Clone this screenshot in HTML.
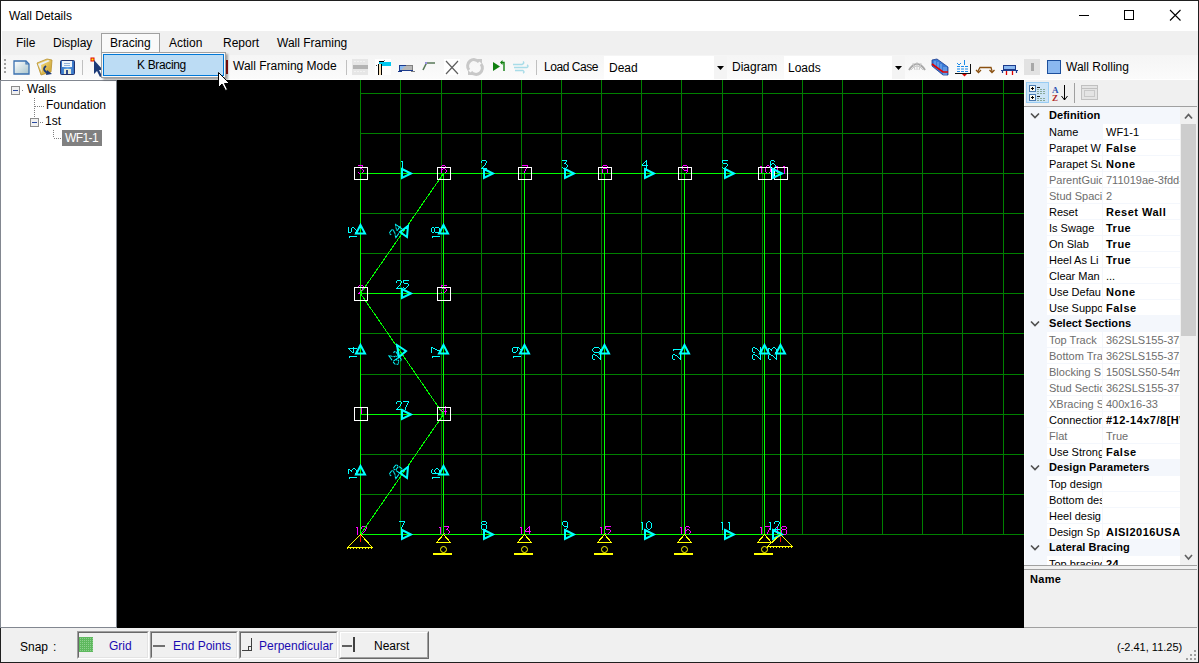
<!DOCTYPE html>
<html><head><meta charset="utf-8"><title>Wall Details</title>
<style>
html,body{margin:0;padding:0;}
body{width:1199px;height:663px;position:relative;overflow:hidden;background:#f0f0f0;font-family:"Liberation Sans",sans-serif;}
.r{position:absolute;}
.t{position:absolute;white-space:pre;line-height:1;font-family:"Liberation Sans",sans-serif;}
svg.r{overflow:visible;}
</style></head><body>
<div class="r" style="left:0px;top:0px;width:1199px;height:663px;background:#1f1f1f;"></div>
<div class="r" style="left:1px;top:1px;width:1197px;height:661px;background:#ffffff;"></div>
<div class="t" style="left:9px;top:9.84px;font-size:12px;color:#000;">Wall Details</div>
<svg class="r" style="left:1070px;top:5px" width="125" height="22" viewBox="1070 5 125 22" shape-rendering="crispEdges"><path d="M1079 15.5 H1089" stroke="#000" stroke-width="1"/><rect x="1124.5" y="10.5" width="9" height="9" stroke="#000" fill="none"/></svg>
<svg class="r" style="left:1165px;top:5px" width="20" height="20" viewBox="1165 5 20 20"><path d="M1170 10 L1180.5 20.5 M1180.5 10 L1170 20.5" stroke="#000" stroke-width="1.1"/></svg>
<div class="r" style="left:2px;top:31px;width:1196px;height:24px;background:#f0f0f0;"></div>
<div class="r" style="left:2px;top:55px;width:1196px;height:24px;background:linear-gradient(#f5f5f5,#fbfbfb);"></div>
<div class="r" style="left:2px;top:79px;width:1196px;height:1px;background:#ffffff;"></div>
<div class="r" style="left:4px;top:59px;width:2px;height:2px;background:#a0a0a0;"></div><div class="r" style="left:4px;top:63px;width:2px;height:2px;background:#a0a0a0;"></div><div class="r" style="left:4px;top:67px;width:2px;height:2px;background:#a0a0a0;"></div><div class="r" style="left:4px;top:71px;width:2px;height:2px;background:#a0a0a0;"></div>

<svg class="r" style="left:0;top:55px" width="1199" height="24" viewBox="0 55 1199 24">
 <defs>
  <linearGradient id="gdoc" x1="0" y1="0" x2="1" y2="1"><stop offset="0" stop-color="#ffffff"/><stop offset="1" stop-color="#a8c4cc"/></linearGradient>
  <linearGradient id="gfold" x1="0" y1="0" x2="1" y2="1"><stop offset="0" stop-color="#f4d878"/><stop offset="1" stop-color="#c8a030"/></linearGradient>
  <linearGradient id="gsave" x1="0" y1="0" x2="1" y2="0"><stop offset="0" stop-color="#2f6cc0"/><stop offset="0.5" stop-color="#6aa8e8"/><stop offset="1" stop-color="#2f6cc0"/></linearGradient>
 </defs>
 <path d="M14 61 H26 L29 64 V74 H14 Z" fill="url(#gdoc)" stroke="#3a70b0" stroke-width="1.3"/>
 <path d="M26 61 V64 H29" fill="none" stroke="#3a70b0" stroke-width="1.2"/>
 <path d="M37 63 L47 59 L52 60 L51 72 L41 75 Z" fill="url(#gfold)" stroke="#b89030" stroke-width="0.8"/>
 <path d="M38 64 L48 60 L50 61 L42 73 Z" fill="#e8f0fa"/>
 <path d="M41 65 L50 61 L51 71 L42 74 Z" fill="url(#gfold)"/>
 <path d="M46 66 Q42 69 46 72 L48 73" stroke="#1d3b78" stroke-width="1.8" fill="none"/>
 <path d="M47 70 L52 74 L46 75 Z" fill="#1d3b78"/>
 <rect x="60.5" y="60.5" width="14" height="14" rx="1" fill="url(#gsave)" stroke="#22336e"/>
 <rect x="62" y="61" width="10" height="6" fill="#eef4fa"/>
 <path d="M64 63.5 H70 M64 65.5 H70" stroke="#7aa0d0" stroke-width="0.8"/>
 <rect x="64" y="69" width="7" height="5" fill="#e8ecd8"/>
 <rect x="66" y="70" width="2" height="4" fill="#2f4a90"/>
 <path d="M82.5 60 V75" stroke="#c0c0c0"/>
 <rect x="91" y="58" width="3" height="3" fill="#ffee00" stroke="#e00000" stroke-width="1"/>
 <path d="M94 60 L94 74 L97 71 L100 77 L102 76 L99 70 L103 70 Z" fill="#1d3b78"/>
 <rect x="226" y="60" width="2" height="14" fill="#a01010"/>
 <path d="M346.5 60 V75" stroke="#c0c0c0"/>
 <!-- grayed beam -->
 <rect x="352" y="59" width="16" height="16" fill="#e6e6e6"/>
 <rect x="353" y="65" width="15" height="4" fill="#b4b4b4"/>
 <path d="M354 61.5 H366 M354 71.5 H366" stroke="#f2f2f2" stroke-dasharray="2 1"/>
 <!-- column -->
 <rect x="375" y="59" width="16" height="16" fill="#ffffff"/>
 <rect x="379" y="62" width="12" height="4" fill="#00c8f0"/>
 <rect x="378" y="64" width="4" height="11" fill="#f8e0b8"/>
 <path d="M378.5 64 V75 M381.5 64 V75" stroke="#000"/>
 <path d="M379 61.5 H384" stroke="#000"/>
 <rect x="384" y="60" width="1" height="1" fill="#808080"/>
 <rect x="376" y="65" width="1" height="1" fill="#404040"/>
 <!-- beam icon -->
 <path d="M400 65 H413 V70 H400 Z" fill="#b8b8b8"/>
 <path d="M400 65 H406 L401 70 H400 Z" fill="#8ab8f0"/>
 <path d="M399.5 65 V72 M399 65.5 H406" stroke="#1d3b8c"/>
 <path d="M406 65.5 H413 M412.5 65 V72" stroke="#808080"/>
 <path d="M399.5 70.5 H413" stroke="#1d3b8c"/>
 <path d="M398 71.5 H402" stroke="#1d3b8c"/>
 <path d="M411 71.5 H415" stroke="#808080"/>
 <!-- bend -->
 <path d="M423 70 L426.5 63 H435" stroke="#5a7a5a" stroke-width="1.6" fill="none"/>
 <rect x="425" y="62" width="2" height="2" fill="#9a90e0"/>
 <!-- X -->
 <rect x="444" y="59" width="16" height="16" fill="#ffffff"/>
 <path d="M446 61 L458 74 M458 61 L446 74" stroke="#606060" stroke-width="1.2"/>
 <!-- refresh gray -->
 <path d="M469 70 A6 6 0 0 1 479 62" stroke="#c8c8c8" stroke-width="3" fill="none"/>
 <path d="M481 64 A6 6 0 0 1 471 72" stroke="#c8c8c8" stroke-width="3" fill="none"/>
 <path d="M477 59 L482 59 L482 64 Z M473 75 L468 75 L468 70 Z" fill="#c8c8c8"/>
 <!-- green play -->
 <path d="M493 62 L500 66.5 L493 71 Z" fill="#108010"/>
 <path d="M501.5 62.5 H504 V71" stroke="#108010" stroke-width="1.4" fill="none"/>
 <path d="M500 62.5 L502.5 60 L502.5 65 Z" fill="#108010"/>
 <!-- wind -->
 <path d="M513 64.5 H522 Q525 63 523 61.5 M514 67.5 H527 Q529 66 527 65 M515 70.5 H523 Q525 72 523 73" stroke="#a8dce8" stroke-width="1.4" fill="none"/>
 <path d="M536.5 60 V75" stroke="#c0c0c0"/>
 <!-- right icons -->
 <path d="M909 70 Q917 58 925 70" stroke="#a8a8a8" stroke-width="2" fill="none"/>
 <path d="M911 70 Q917 62 923 70 M913 63 L915 70 M917 62 V70 M921 63 L919 70" stroke="#c8c8c8" stroke-width="1" fill="none"/>
 <path d="M932 60 L937 59 L948 67 L948 75 L943 75 L932 66 Z" fill="#3a7ad8" stroke="#1d3b8c" stroke-width="0.8"/>
 <path d="M935 61 L935 66 M938 62 L938 68 M941 64 L941 71 M944 67 V75 M946 67 V75" stroke="#9cc8f4" stroke-width="0.8"/>
 <path d="M932 64 L943 72 H948" stroke="#e00000" stroke-width="1.6" fill="none"/>
 <path d="M964.5 60 V65" stroke="#1a8ae8"/>
 <path d="M957 63 L959 65 L961 63" stroke="#1a8ae8" fill="none"/>
 <path d="M957 66.5 H969 M957 69 H969 M957 71.5 H969" stroke="#1a8ae8" stroke-dasharray="3 1" fill="none"/>
 <path d="M955 73.5 H971 M970.5 64 V73" stroke="#101010" fill="none"/>
 <path d="M962 74 H967 L964.5 76.5 Z" fill="#e00000"/>
 <path d="M978 71 L980 67.5 H991 L992 71" stroke="#8a5010" stroke-width="1.3" fill="none"/>
 <path d="M976 70 L978.5 72.5 L981 70 M989.5 70 L992 72.5 L994.5 70" stroke="#8a5010" stroke-width="1.3" fill="none"/>
 <rect x="1003.5" y="65.5" width="12" height="4" fill="#8ab8f0" stroke="#1d3b8c"/>
 <path d="M1001 70.5 H1018 M1002.5 70 V73 M1016.5 70 V73" stroke="#1d3b8c" stroke-width="1.2"/>
 <path d="M1006.5 71 V75 M1012.5 71 V75" stroke="#e00000" stroke-width="1.3"/>
 <rect x="1024" y="59" width="16" height="16" fill="#e2e2e2"/>
 <rect x="1031" y="63" width="3" height="8" fill="#a8a8a8"/>
 <rect x="1047.5" y="60.5" width="13" height="13" fill="#8ab8f0" stroke="#1d4f9c"/>
</svg>
<div class="t" style="left:233px;top:60.34px;font-size:12px;color:#000;">Wall Framing Mode</div>
<div class="t" style="left:544px;top:60.84px;font-size:12px;color:#000;letter-spacing:-0.45px;">Load Case</div>
<div class="r" style="left:604px;top:56px;width:123px;height:23px;background:#ffffff;"></div>
<div class="r" style="left:714px;top:56px;width:13px;height:23px;background:#f4f4f4;"></div>
<svg class="r" style="left:714px;top:60px" width="13" height="15"><path d="M3 6 H10 L6.5 10 Z" fill="#000"/></svg>
<div class="t" style="left:609px;top:61.84px;font-size:12px;color:#000;">Dead</div>
<div class="t" style="left:732px;top:60.84px;font-size:12px;color:#000;">Diagram</div>
<div class="r" style="left:784px;top:56px;width:121px;height:23px;background:#ffffff;"></div>
<div class="r" style="left:892px;top:56px;width:13px;height:23px;background:#f4f4f4;"></div>
<svg class="r" style="left:892px;top:60px" width="13" height="15"><path d="M3 6 H10 L6.5 10 Z" fill="#000"/></svg>
<div class="t" style="left:788px;top:61.84px;font-size:12px;color:#000;">Loads</div>
<div class="t" style="left:1066px;top:60.84px;font-size:12px;color:#000;">Wall Rolling</div>
<div class="r" style="left:0px;top:80px;width:117px;height:548px;background:#828790;"></div>
<div class="r" style="left:1px;top:81px;width:115px;height:546px;background:#ffffff;"></div>
<div class="r" style="left:1px;top:81px;width:1px;height:546px;background:#ffffff;"></div>
<svg class="r" style="left:0;top:80px" width="117" height="80" viewBox="0 80 117 80" shape-rendering="crispEdges">
 <rect x="11.5" y="86.5" width="8" height="8" fill="#f0f0f0" stroke="#8c8c8c"/>
 <path d="M13 90.5 H18" stroke="#2a4aa0"/>
 <rect x="30.5" y="118.5" width="8" height="8" fill="#f0f0f0" stroke="#8c8c8c"/>
 <path d="M32 122.5 H37" stroke="#2a4aa0"/>
 <path d="M21.5 90.5 H24" stroke="#808080" stroke-dasharray="1 1"/>
 <path d="M34.5 98 V117" stroke="#808080" stroke-dasharray="1 1"/>
 <path d="M35 106.5 H44" stroke="#808080" stroke-dasharray="1 1"/>
 <path d="M40 122.5 H44" stroke="#808080" stroke-dasharray="1 1"/>
 <path d="M53.5 130 V138" stroke="#808080" stroke-dasharray="1 1"/>
 <path d="M54 138.5 H62" stroke="#808080" stroke-dasharray="1 1"/>
 <rect x="62" y="130" width="40" height="16" fill="#808080"/>
</svg>
<div class="t" style="left:27px;top:82.84px;font-size:12px;color:#000;">Walls</div>
<div class="t" style="left:46px;top:98.84px;font-size:12px;color:#000;">Foundation</div>
<div class="t" style="left:45px;top:114.84px;font-size:12px;color:#000;">1st</div>
<div class="t" style="left:65px;top:131.84px;font-size:12px;color:#ffffff;letter-spacing:-0.6px;">WF1-1</div>
<svg class="r" style="left:117px;top:80px" width="907" height="548" viewBox="117 80 907 548" shape-rendering="crispEdges"><rect x="117" y="80" width="907" height="548" fill="#000"/>
<path d="M360.5 80 V535 M400.5 80 V535 M441.5 80 V535 M481.5 80 V535 M521.5 80 V535 M561.5 80 V535 M601.5 80 V535 M641.5 80 V535 M681.5 80 V535 M722.5 80 V535 M762.5 80 V535 M802.5 80 V535 M842.5 80 V535 M882.5 80 V535 M922.5 80 V535 M962.5 80 V535 M1003.5 80 V535 M360 93.5 H1024 M360 133.5 H1024 M360 173.5 H1024 M360 213.5 H1024 M360 253.5 H1024 M360 293.5 H1024 M360 333.5 H1024 M360 374.5 H1024 M360 414.5 H1024 M360 454.5 H1024 M360 494.5 H1024 M360 534.5 H1024" stroke="#008000" stroke-width="1" fill="none"/>
<path d="M358 165h1v1h-1z M359 165h1v1h-1z M360 165h1v1h-1z M361 165h1v1h-1z M362 165h1v1h-1z M362 166h1v1h-1z M361 167h1v1h-1z M360 168h1v1h-1z M361 168h1v1h-1z M362 169h1v1h-1z M363 170h1v1h-1z M363 171h1v1h-1z M358 172h1v1h-1z M362 172h1v1h-1z M359 173h1v1h-1z M360 173h1v1h-1z M361 173h1v1h-1z" fill="#ff00ff"/>
<path d="M442 165h1v1h-1z M443 165h1v1h-1z M444 165h1v1h-1z M441 166h1v1h-1z M445 166h1v1h-1z M441 167h1v1h-1z M441 168h1v1h-1z M443 168h1v1h-1z M444 168h1v1h-1z M441 169h1v1h-1z M442 169h1v1h-1z M445 169h1v1h-1z M441 170h1v1h-1z M446 170h1v1h-1z M441 171h1v1h-1z M446 171h1v1h-1z M441 172h1v1h-1z M445 172h1v1h-1z M442 173h1v1h-1z M443 173h1v1h-1z M444 173h1v1h-1z" fill="#ff00ff"/>
<path d="M522 165h1v1h-1z M523 165h1v1h-1z M524 165h1v1h-1z M525 165h1v1h-1z M526 165h1v1h-1z M527 165h1v1h-1z M527 166h1v1h-1z M526 167h1v1h-1z M526 168h1v1h-1z M525 169h1v1h-1z M525 170h1v1h-1z M524 171h1v1h-1z M524 172h1v1h-1z M524 173h1v1h-1z" fill="#ff00ff"/>
<path d="M603 165h1v1h-1z M604 165h1v1h-1z M605 165h1v1h-1z M606 165h1v1h-1z M602 166h1v1h-1z M607 166h1v1h-1z M602 167h1v1h-1z M607 167h1v1h-1z M603 168h1v1h-1z M604 168h1v1h-1z M605 168h1v1h-1z M606 168h1v1h-1z M602 169h1v1h-1z M607 169h1v1h-1z M602 170h1v1h-1z M607 170h1v1h-1z M602 171h1v1h-1z M607 171h1v1h-1z M602 172h1v1h-1z M607 172h1v1h-1z M603 173h1v1h-1z M604 173h1v1h-1z M605 173h1v1h-1z M606 173h1v1h-1z" fill="#ff00ff"/>
<path d="M683 165h1v1h-1z M684 165h1v1h-1z M685 165h1v1h-1z M686 165h1v1h-1z M682 166h1v1h-1z M687 166h1v1h-1z M682 167h1v1h-1z M687 167h1v1h-1z M682 168h1v1h-1z M687 168h1v1h-1z M683 169h1v1h-1z M687 169h1v1h-1z M684 170h1v1h-1z M685 170h1v1h-1z M686 170h1v1h-1z M687 170h1v1h-1z M687 171h1v1h-1z M686 172h1v1h-1z M685 173h1v1h-1z" fill="#ff00ff"/>
<path d="M760 166h1v1h-1z M761 166h1v1h-1z M761 167h1v1h-1z M761 168h1v1h-1z M761 169h1v1h-1z M761 170h1v1h-1z M761 171h1v1h-1z M761 172h1v1h-1z M761 173h1v1h-1z M767 165h1v1h-1z M768 165h1v1h-1z M766 166h1v1h-1z M769 166h1v1h-1z M765 167h1v1h-1z M770 167h1v1h-1z M765 168h1v1h-1z M770 168h1v1h-1z M765 169h1v1h-1z M770 169h1v1h-1z M765 170h1v1h-1z M770 170h1v1h-1z M765 171h1v1h-1z M770 171h1v1h-1z M766 172h1v1h-1z M769 172h1v1h-1z M767 173h1v1h-1z M768 173h1v1h-1z" fill="#ff00ff"/>
<path d="M776 166h1v1h-1z M777 166h1v1h-1z M777 167h1v1h-1z M777 168h1v1h-1z M777 169h1v1h-1z M777 170h1v1h-1z M777 171h1v1h-1z M777 172h1v1h-1z M777 173h1v1h-1z M783 166h1v1h-1z M784 166h1v1h-1z M784 167h1v1h-1z M784 168h1v1h-1z M784 169h1v1h-1z M784 170h1v1h-1z M784 171h1v1h-1z M784 172h1v1h-1z M784 173h1v1h-1z" fill="#ff00ff"/>
<path d="M356 527h1v1h-1z M357 527h1v1h-1z M357 528h1v1h-1z M357 529h1v1h-1z M357 530h1v1h-1z M357 531h1v1h-1z M357 532h1v1h-1z M357 533h1v1h-1z M357 534h1v1h-1z M362 526h1v1h-1z M363 526h1v1h-1z M364 526h1v1h-1z M365 526h1v1h-1z M361 527h1v1h-1z M366 527h1v1h-1z M361 528h1v1h-1z M366 528h1v1h-1z M365 529h1v1h-1z M365 530h1v1h-1z M364 531h1v1h-1z M363 532h1v1h-1z M362 533h1v1h-1z M361 534h1v1h-1z M362 534h1v1h-1z M363 534h1v1h-1z M364 534h1v1h-1z M365 534h1v1h-1z M366 534h1v1h-1z" fill="#ff00ff"/>
<path d="M439 527h1v1h-1z M440 527h1v1h-1z M440 528h1v1h-1z M440 529h1v1h-1z M440 530h1v1h-1z M440 531h1v1h-1z M440 532h1v1h-1z M440 533h1v1h-1z M440 534h1v1h-1z M444 526h1v1h-1z M445 526h1v1h-1z M446 526h1v1h-1z M447 526h1v1h-1z M448 526h1v1h-1z M448 527h1v1h-1z M447 528h1v1h-1z M446 529h1v1h-1z M447 529h1v1h-1z M448 530h1v1h-1z M449 531h1v1h-1z M449 532h1v1h-1z M444 533h1v1h-1z M448 533h1v1h-1z M445 534h1v1h-1z M446 534h1v1h-1z M447 534h1v1h-1z" fill="#ff00ff"/>
<path d="M520 527h1v1h-1z M521 527h1v1h-1z M521 528h1v1h-1z M521 529h1v1h-1z M521 530h1v1h-1z M521 531h1v1h-1z M521 532h1v1h-1z M521 533h1v1h-1z M521 534h1v1h-1z M529 526h1v1h-1z M528 527h1v1h-1z M529 527h1v1h-1z M527 528h1v1h-1z M529 528h1v1h-1z M526 529h1v1h-1z M529 529h1v1h-1z M525 530h1v1h-1z M529 530h1v1h-1z M525 531h1v1h-1z M526 531h1v1h-1z M527 531h1v1h-1z M528 531h1v1h-1z M529 531h1v1h-1z M530 531h1v1h-1z M529 532h1v1h-1z M529 533h1v1h-1z M529 534h1v1h-1z" fill="#ff00ff"/>
<path d="M600 527h1v1h-1z M601 527h1v1h-1z M601 528h1v1h-1z M601 529h1v1h-1z M601 530h1v1h-1z M601 531h1v1h-1z M601 532h1v1h-1z M601 533h1v1h-1z M601 534h1v1h-1z M605 526h1v1h-1z M606 526h1v1h-1z M607 526h1v1h-1z M608 526h1v1h-1z M609 526h1v1h-1z M610 526h1v1h-1z M605 527h1v1h-1z M605 528h1v1h-1z M606 529h1v1h-1z M607 529h1v1h-1z M608 529h1v1h-1z M609 529h1v1h-1z M610 530h1v1h-1z M610 531h1v1h-1z M609 532h1v1h-1z M605 533h1v1h-1z M608 533h1v1h-1z M606 534h1v1h-1z M607 534h1v1h-1z" fill="#ff00ff"/>
<path d="M680 527h1v1h-1z M681 527h1v1h-1z M681 528h1v1h-1z M681 529h1v1h-1z M681 530h1v1h-1z M681 531h1v1h-1z M681 532h1v1h-1z M681 533h1v1h-1z M681 534h1v1h-1z M686 526h1v1h-1z M687 526h1v1h-1z M688 526h1v1h-1z M685 527h1v1h-1z M689 527h1v1h-1z M685 528h1v1h-1z M685 529h1v1h-1z M687 529h1v1h-1z M688 529h1v1h-1z M685 530h1v1h-1z M686 530h1v1h-1z M689 530h1v1h-1z M685 531h1v1h-1z M690 531h1v1h-1z M685 532h1v1h-1z M690 532h1v1h-1z M685 533h1v1h-1z M689 533h1v1h-1z M686 534h1v1h-1z M687 534h1v1h-1z M688 534h1v1h-1z" fill="#ff00ff"/>
<path d="M760 527h1v1h-1z M761 527h1v1h-1z M761 528h1v1h-1z M761 529h1v1h-1z M761 530h1v1h-1z M761 531h1v1h-1z M761 532h1v1h-1z M761 533h1v1h-1z M761 534h1v1h-1z M765 526h1v1h-1z M766 526h1v1h-1z M767 526h1v1h-1z M768 526h1v1h-1z M769 526h1v1h-1z M770 526h1v1h-1z M770 527h1v1h-1z M769 528h1v1h-1z M769 529h1v1h-1z M768 530h1v1h-1z M768 531h1v1h-1z M767 532h1v1h-1z M767 533h1v1h-1z M767 534h1v1h-1z" fill="#ff00ff"/>
<path d="M776 527h1v1h-1z M777 527h1v1h-1z M777 528h1v1h-1z M777 529h1v1h-1z M777 530h1v1h-1z M777 531h1v1h-1z M777 532h1v1h-1z M777 533h1v1h-1z M777 534h1v1h-1z M782 526h1v1h-1z M783 526h1v1h-1z M784 526h1v1h-1z M785 526h1v1h-1z M781 527h1v1h-1z M786 527h1v1h-1z M781 528h1v1h-1z M786 528h1v1h-1z M782 529h1v1h-1z M783 529h1v1h-1z M784 529h1v1h-1z M785 529h1v1h-1z M781 530h1v1h-1z M786 530h1v1h-1z M781 531h1v1h-1z M786 531h1v1h-1z M781 532h1v1h-1z M786 532h1v1h-1z M781 533h1v1h-1z M786 533h1v1h-1z M782 534h1v1h-1z M783 534h1v1h-1z M784 534h1v1h-1z M785 534h1v1h-1z" fill="#ff00ff"/>
<path d="M359 285h1v1h-1z M360 285h1v1h-1z M361 285h1v1h-1z M362 285h1v1h-1z M358 286h1v1h-1z M363 286h1v1h-1z M358 287h1v1h-1z M363 287h1v1h-1z M362 288h1v1h-1z M362 289h1v1h-1z M361 290h1v1h-1z M360 291h1v1h-1z M359 292h1v1h-1z M358 293h1v1h-1z M359 293h1v1h-1z M360 293h1v1h-1z M361 293h1v1h-1z M362 293h1v1h-1z M363 293h1v1h-1z" fill="#ff00ff"/>
<path d="M441 285h1v1h-1z M442 285h1v1h-1z M443 285h1v1h-1z M444 285h1v1h-1z M445 285h1v1h-1z M446 285h1v1h-1z M441 286h1v1h-1z M441 287h1v1h-1z M442 288h1v1h-1z M443 288h1v1h-1z M444 288h1v1h-1z M445 288h1v1h-1z M446 289h1v1h-1z M446 290h1v1h-1z M445 291h1v1h-1z M441 292h1v1h-1z M444 292h1v1h-1z M442 293h1v1h-1z M443 293h1v1h-1z" fill="#ff00ff"/>
<path d="M360 407h1v1h-1z M361 407h1v1h-1z M361 408h1v1h-1z M361 409h1v1h-1z M361 410h1v1h-1z M361 411h1v1h-1z M361 412h1v1h-1z M361 413h1v1h-1z M361 414h1v1h-1z" fill="#ff00ff"/>
<path d="M445 406h1v1h-1z M444 407h1v1h-1z M445 407h1v1h-1z M443 408h1v1h-1z M445 408h1v1h-1z M442 409h1v1h-1z M445 409h1v1h-1z M441 410h1v1h-1z M445 410h1v1h-1z M441 411h1v1h-1z M442 411h1v1h-1z M443 411h1v1h-1z M444 411h1v1h-1z M445 411h1v1h-1z M446 411h1v1h-1z M445 412h1v1h-1z M445 413h1v1h-1z M445 414h1v1h-1z" fill="#ff00ff"/>
<path d="M360 173.5 H781 M360 534.5 H781 M360 293.5 H444 M360 414.5 H444 M360.5 173 V535 M443.5 173 V535 M524.5 173 V535 M604.5 173 V535 M684.5 173 V535 M764.5 173 V535 M780.5 173 V535" stroke="#00ff00" stroke-width="1" fill="none"/>
<path d="M443.5 173.5 L360.5 293.5 L443.5 414.5 L360.5 534.5" stroke="#00ff00" stroke-width="1" fill="none"/>
<path d="M354.5 167.5 h13 v12 h-13 Z M437.5 167.5 h13 v12 h-13 Z M518.5 167.5 h13 v12 h-13 Z M598.5 167.5 h13 v12 h-13 Z M678.5 167.5 h13 v12 h-13 Z M758.5 167.5 h13 v12 h-13 Z M774.5 167.5 h13 v12 h-13 Z M354.5 287.5 h13 v13 h-13 Z M437.5 287.5 h13 v13 h-13 Z M354.5 407.5 h13 v13 h-13 Z M437.5 407.5 h13 v13 h-13 Z" stroke="#ffffff" stroke-width="1" fill="none"/>
<path d="M401 161h1v1h-1z M402 161h1v1h-1z M402 162h1v1h-1z M402 163h1v1h-1z M402 164h1v1h-1z M402 165h1v1h-1z M402 166h1v1h-1z M402 167h1v1h-1z M402 168h1v1h-1z" fill="#00ffff"/>
<path d="M482 160h1v1h-1z M483 160h1v1h-1z M484 160h1v1h-1z M485 160h1v1h-1z M481 161h1v1h-1z M486 161h1v1h-1z M481 162h1v1h-1z M486 162h1v1h-1z M485 163h1v1h-1z M485 164h1v1h-1z M484 165h1v1h-1z M483 166h1v1h-1z M482 167h1v1h-1z M481 168h1v1h-1z M482 168h1v1h-1z M483 168h1v1h-1z M484 168h1v1h-1z M485 168h1v1h-1z M486 168h1v1h-1z" fill="#00ffff"/>
<path d="M562 160h1v1h-1z M563 160h1v1h-1z M564 160h1v1h-1z M565 160h1v1h-1z M566 160h1v1h-1z M566 161h1v1h-1z M565 162h1v1h-1z M564 163h1v1h-1z M565 163h1v1h-1z M566 164h1v1h-1z M567 165h1v1h-1z M567 166h1v1h-1z M562 167h1v1h-1z M566 167h1v1h-1z M563 168h1v1h-1z M564 168h1v1h-1z M565 168h1v1h-1z" fill="#00ffff"/>
<path d="M646 160h1v1h-1z M645 161h1v1h-1z M646 161h1v1h-1z M644 162h1v1h-1z M646 162h1v1h-1z M643 163h1v1h-1z M646 163h1v1h-1z M642 164h1v1h-1z M646 164h1v1h-1z M642 165h1v1h-1z M643 165h1v1h-1z M644 165h1v1h-1z M645 165h1v1h-1z M646 165h1v1h-1z M647 165h1v1h-1z M646 166h1v1h-1z M646 167h1v1h-1z M646 168h1v1h-1z" fill="#00ffff"/>
<path d="M722 160h1v1h-1z M723 160h1v1h-1z M724 160h1v1h-1z M725 160h1v1h-1z M726 160h1v1h-1z M727 160h1v1h-1z M722 161h1v1h-1z M722 162h1v1h-1z M723 163h1v1h-1z M724 163h1v1h-1z M725 163h1v1h-1z M726 163h1v1h-1z M727 164h1v1h-1z M727 165h1v1h-1z M726 166h1v1h-1z M722 167h1v1h-1z M725 167h1v1h-1z M723 168h1v1h-1z M724 168h1v1h-1z" fill="#00ffff"/>
<path d="M771 160h1v1h-1z M772 160h1v1h-1z M773 160h1v1h-1z M770 161h1v1h-1z M774 161h1v1h-1z M770 162h1v1h-1z M770 163h1v1h-1z M772 163h1v1h-1z M773 163h1v1h-1z M770 164h1v1h-1z M771 164h1v1h-1z M774 164h1v1h-1z M770 165h1v1h-1z M775 165h1v1h-1z M770 166h1v1h-1z M775 166h1v1h-1z M770 167h1v1h-1z M774 167h1v1h-1z M771 168h1v1h-1z M772 168h1v1h-1z M773 168h1v1h-1z" fill="#00ffff"/>
<path d="M399 521h1v1h-1z M400 521h1v1h-1z M401 521h1v1h-1z M402 521h1v1h-1z M403 521h1v1h-1z M404 521h1v1h-1z M404 522h1v1h-1z M403 523h1v1h-1z M403 524h1v1h-1z M402 525h1v1h-1z M402 526h1v1h-1z M401 527h1v1h-1z M401 528h1v1h-1z M401 529h1v1h-1z" fill="#00ffff"/>
<path d="M482 521h1v1h-1z M483 521h1v1h-1z M484 521h1v1h-1z M485 521h1v1h-1z M481 522h1v1h-1z M486 522h1v1h-1z M481 523h1v1h-1z M486 523h1v1h-1z M482 524h1v1h-1z M483 524h1v1h-1z M484 524h1v1h-1z M485 524h1v1h-1z M481 525h1v1h-1z M486 525h1v1h-1z M481 526h1v1h-1z M486 526h1v1h-1z M481 527h1v1h-1z M486 527h1v1h-1z M481 528h1v1h-1z M486 528h1v1h-1z M482 529h1v1h-1z M483 529h1v1h-1z M484 529h1v1h-1z M485 529h1v1h-1z" fill="#00ffff"/>
<path d="M563 521h1v1h-1z M564 521h1v1h-1z M565 521h1v1h-1z M566 521h1v1h-1z M562 522h1v1h-1z M567 522h1v1h-1z M562 523h1v1h-1z M567 523h1v1h-1z M562 524h1v1h-1z M567 524h1v1h-1z M563 525h1v1h-1z M567 525h1v1h-1z M564 526h1v1h-1z M565 526h1v1h-1z M566 526h1v1h-1z M567 526h1v1h-1z M567 527h1v1h-1z M566 528h1v1h-1z M565 529h1v1h-1z" fill="#00ffff"/>
<path d="M641 522h1v1h-1z M642 522h1v1h-1z M642 523h1v1h-1z M642 524h1v1h-1z M642 525h1v1h-1z M642 526h1v1h-1z M642 527h1v1h-1z M642 528h1v1h-1z M642 529h1v1h-1z M648 521h1v1h-1z M649 521h1v1h-1z M647 522h1v1h-1z M650 522h1v1h-1z M646 523h1v1h-1z M651 523h1v1h-1z M646 524h1v1h-1z M651 524h1v1h-1z M646 525h1v1h-1z M651 525h1v1h-1z M646 526h1v1h-1z M651 526h1v1h-1z M646 527h1v1h-1z M651 527h1v1h-1z M647 528h1v1h-1z M650 528h1v1h-1z M648 529h1v1h-1z M649 529h1v1h-1z" fill="#00ffff"/>
<path d="M721 522h1v1h-1z M722 522h1v1h-1z M722 523h1v1h-1z M722 524h1v1h-1z M722 525h1v1h-1z M722 526h1v1h-1z M722 527h1v1h-1z M722 528h1v1h-1z M722 529h1v1h-1z M728 522h1v1h-1z M729 522h1v1h-1z M729 523h1v1h-1z M729 524h1v1h-1z M729 525h1v1h-1z M729 526h1v1h-1z M729 527h1v1h-1z M729 528h1v1h-1z M729 529h1v1h-1z" fill="#00ffff"/>
<path d="M769 522h1v1h-1z M770 522h1v1h-1z M770 523h1v1h-1z M770 524h1v1h-1z M770 525h1v1h-1z M770 526h1v1h-1z M770 527h1v1h-1z M770 528h1v1h-1z M770 529h1v1h-1z M775 521h1v1h-1z M776 521h1v1h-1z M777 521h1v1h-1z M778 521h1v1h-1z M774 522h1v1h-1z M779 522h1v1h-1z M774 523h1v1h-1z M779 523h1v1h-1z M778 524h1v1h-1z M778 525h1v1h-1z M777 526h1v1h-1z M776 527h1v1h-1z M775 528h1v1h-1z M774 529h1v1h-1z M775 529h1v1h-1z M776 529h1v1h-1z M777 529h1v1h-1z M778 529h1v1h-1z M779 529h1v1h-1z" fill="#00ffff"/>
<path d="M397 280h1v1h-1z M398 280h1v1h-1z M399 280h1v1h-1z M400 280h1v1h-1z M396 281h1v1h-1z M401 281h1v1h-1z M396 282h1v1h-1z M401 282h1v1h-1z M400 283h1v1h-1z M400 284h1v1h-1z M399 285h1v1h-1z M398 286h1v1h-1z M397 287h1v1h-1z M396 288h1v1h-1z M397 288h1v1h-1z M398 288h1v1h-1z M399 288h1v1h-1z M400 288h1v1h-1z M401 288h1v1h-1z M403 280h1v1h-1z M404 280h1v1h-1z M405 280h1v1h-1z M406 280h1v1h-1z M407 280h1v1h-1z M408 280h1v1h-1z M403 281h1v1h-1z M403 282h1v1h-1z M404 283h1v1h-1z M405 283h1v1h-1z M406 283h1v1h-1z M407 283h1v1h-1z M408 284h1v1h-1z M408 285h1v1h-1z M407 286h1v1h-1z M403 287h1v1h-1z M406 287h1v1h-1z M404 288h1v1h-1z M405 288h1v1h-1z" fill="#00ffff"/>
<path d="M397 401h1v1h-1z M398 401h1v1h-1z M399 401h1v1h-1z M400 401h1v1h-1z M396 402h1v1h-1z M401 402h1v1h-1z M396 403h1v1h-1z M401 403h1v1h-1z M400 404h1v1h-1z M400 405h1v1h-1z M399 406h1v1h-1z M398 407h1v1h-1z M397 408h1v1h-1z M396 409h1v1h-1z M397 409h1v1h-1z M398 409h1v1h-1z M399 409h1v1h-1z M400 409h1v1h-1z M401 409h1v1h-1z M403 401h1v1h-1z M404 401h1v1h-1z M405 401h1v1h-1z M406 401h1v1h-1z M407 401h1v1h-1z M408 401h1v1h-1z M408 402h1v1h-1z M407 403h1v1h-1z M407 404h1v1h-1z M406 405h1v1h-1z M406 406h1v1h-1z M405 407h1v1h-1z M405 408h1v1h-1z M405 409h1v1h-1z" fill="#00ffff"/>
<path d="M349 237h1v1h-1z M349 236h1v1h-1z M350 236h1v1h-1z M351 236h1v1h-1z M352 236h1v1h-1z M353 236h1v1h-1z M354 236h1v1h-1z M355 236h1v1h-1z M356 236h1v1h-1z M348 232h1v1h-1z M348 231h1v1h-1z M348 230h1v1h-1z M348 229h1v1h-1z M348 228h1v1h-1z M348 227h1v1h-1z M349 232h1v1h-1z M350 232h1v1h-1z M351 231h1v1h-1z M351 230h1v1h-1z M351 229h1v1h-1z M351 228h1v1h-1z M352 227h1v1h-1z M353 227h1v1h-1z M354 228h1v1h-1z M355 232h1v1h-1z M355 229h1v1h-1z M356 231h1v1h-1z M356 230h1v1h-1z" fill="#00ffff"/>
<path d="M349 357h1v1h-1z M349 356h1v1h-1z M350 356h1v1h-1z M351 356h1v1h-1z M352 356h1v1h-1z M353 356h1v1h-1z M354 356h1v1h-1z M355 356h1v1h-1z M356 356h1v1h-1z M348 348h1v1h-1z M349 349h1v1h-1z M349 348h1v1h-1z M350 350h1v1h-1z M350 348h1v1h-1z M351 351h1v1h-1z M351 348h1v1h-1z M352 352h1v1h-1z M352 348h1v1h-1z M353 352h1v1h-1z M353 351h1v1h-1z M353 350h1v1h-1z M353 349h1v1h-1z M353 348h1v1h-1z M353 347h1v1h-1z M354 348h1v1h-1z M355 348h1v1h-1z M356 348h1v1h-1z" fill="#00ffff"/>
<path d="M349 478h1v1h-1z M349 477h1v1h-1z M350 477h1v1h-1z M351 477h1v1h-1z M352 477h1v1h-1z M353 477h1v1h-1z M354 477h1v1h-1z M355 477h1v1h-1z M356 477h1v1h-1z M348 473h1v1h-1z M348 472h1v1h-1z M348 471h1v1h-1z M348 470h1v1h-1z M348 469h1v1h-1z M349 469h1v1h-1z M350 470h1v1h-1z M351 471h1v1h-1z M351 470h1v1h-1z M352 469h1v1h-1z M353 468h1v1h-1z M354 468h1v1h-1z M355 473h1v1h-1z M355 469h1v1h-1z M356 472h1v1h-1z M356 471h1v1h-1z M356 470h1v1h-1z" fill="#00ffff"/>
<path d="M432 237h1v1h-1z M432 236h1v1h-1z M433 236h1v1h-1z M434 236h1v1h-1z M435 236h1v1h-1z M436 236h1v1h-1z M437 236h1v1h-1z M438 236h1v1h-1z M439 236h1v1h-1z M431 231h1v1h-1z M431 230h1v1h-1z M431 229h1v1h-1z M431 228h1v1h-1z M432 232h1v1h-1z M432 227h1v1h-1z M433 232h1v1h-1z M433 227h1v1h-1z M434 231h1v1h-1z M434 230h1v1h-1z M434 229h1v1h-1z M434 228h1v1h-1z M435 232h1v1h-1z M435 227h1v1h-1z M436 232h1v1h-1z M436 227h1v1h-1z M437 232h1v1h-1z M437 227h1v1h-1z M438 232h1v1h-1z M438 227h1v1h-1z M439 231h1v1h-1z M439 230h1v1h-1z M439 229h1v1h-1z M439 228h1v1h-1z" fill="#00ffff"/>
<path d="M432 357h1v1h-1z M432 356h1v1h-1z M433 356h1v1h-1z M434 356h1v1h-1z M435 356h1v1h-1z M436 356h1v1h-1z M437 356h1v1h-1z M438 356h1v1h-1z M439 356h1v1h-1z M431 352h1v1h-1z M431 351h1v1h-1z M431 350h1v1h-1z M431 349h1v1h-1z M431 348h1v1h-1z M431 347h1v1h-1z M432 347h1v1h-1z M433 348h1v1h-1z M434 348h1v1h-1z M435 349h1v1h-1z M436 349h1v1h-1z M437 350h1v1h-1z M438 350h1v1h-1z M439 350h1v1h-1z" fill="#00ffff"/>
<path d="M432 478h1v1h-1z M432 477h1v1h-1z M433 477h1v1h-1z M434 477h1v1h-1z M435 477h1v1h-1z M436 477h1v1h-1z M437 477h1v1h-1z M438 477h1v1h-1z M439 477h1v1h-1z M431 472h1v1h-1z M431 471h1v1h-1z M431 470h1v1h-1z M432 473h1v1h-1z M432 469h1v1h-1z M433 473h1v1h-1z M434 473h1v1h-1z M434 471h1v1h-1z M434 470h1v1h-1z M435 473h1v1h-1z M435 472h1v1h-1z M435 469h1v1h-1z M436 473h1v1h-1z M436 468h1v1h-1z M437 473h1v1h-1z M437 468h1v1h-1z M438 473h1v1h-1z M438 469h1v1h-1z M439 472h1v1h-1z M439 471h1v1h-1z M439 470h1v1h-1z" fill="#00ffff"/>
<path d="M513 357h1v1h-1z M513 356h1v1h-1z M514 356h1v1h-1z M515 356h1v1h-1z M516 356h1v1h-1z M517 356h1v1h-1z M518 356h1v1h-1z M519 356h1v1h-1z M520 356h1v1h-1z M512 351h1v1h-1z M512 350h1v1h-1z M512 349h1v1h-1z M512 348h1v1h-1z M513 352h1v1h-1z M513 347h1v1h-1z M514 352h1v1h-1z M514 347h1v1h-1z M515 352h1v1h-1z M515 347h1v1h-1z M516 351h1v1h-1z M516 347h1v1h-1z M517 350h1v1h-1z M517 349h1v1h-1z M517 348h1v1h-1z M517 347h1v1h-1z M518 347h1v1h-1z M519 348h1v1h-1z M520 349h1v1h-1z" fill="#00ffff"/>
<path d="M592 358h1v1h-1z M592 357h1v1h-1z M592 356h1v1h-1z M592 355h1v1h-1z M593 359h1v1h-1z M593 354h1v1h-1z M594 359h1v1h-1z M594 354h1v1h-1z M595 355h1v1h-1z M596 355h1v1h-1z M597 356h1v1h-1z M598 357h1v1h-1z M599 358h1v1h-1z M600 359h1v1h-1z M600 358h1v1h-1z M600 357h1v1h-1z M600 356h1v1h-1z M600 355h1v1h-1z M600 354h1v1h-1z M592 350h1v1h-1z M592 349h1v1h-1z M593 351h1v1h-1z M593 348h1v1h-1z M594 352h1v1h-1z M594 347h1v1h-1z M595 352h1v1h-1z M595 347h1v1h-1z M596 352h1v1h-1z M596 347h1v1h-1z M597 352h1v1h-1z M597 347h1v1h-1z M598 352h1v1h-1z M598 347h1v1h-1z M599 351h1v1h-1z M599 348h1v1h-1z M600 350h1v1h-1z M600 349h1v1h-1z" fill="#00ffff"/>
<path d="M672 358h1v1h-1z M672 357h1v1h-1z M672 356h1v1h-1z M672 355h1v1h-1z M673 359h1v1h-1z M673 354h1v1h-1z M674 359h1v1h-1z M674 354h1v1h-1z M675 355h1v1h-1z M676 355h1v1h-1z M677 356h1v1h-1z M678 357h1v1h-1z M679 358h1v1h-1z M680 359h1v1h-1z M680 358h1v1h-1z M680 357h1v1h-1z M680 356h1v1h-1z M680 355h1v1h-1z M680 354h1v1h-1z M673 350h1v1h-1z M673 349h1v1h-1z M674 349h1v1h-1z M675 349h1v1h-1z M676 349h1v1h-1z M677 349h1v1h-1z M678 349h1v1h-1z M679 349h1v1h-1z M680 349h1v1h-1z" fill="#00ffff"/>
<path d="M752 358h1v1h-1z M752 357h1v1h-1z M752 356h1v1h-1z M752 355h1v1h-1z M753 359h1v1h-1z M753 354h1v1h-1z M754 359h1v1h-1z M754 354h1v1h-1z M755 355h1v1h-1z M756 355h1v1h-1z M757 356h1v1h-1z M758 357h1v1h-1z M759 358h1v1h-1z M760 359h1v1h-1z M760 358h1v1h-1z M760 357h1v1h-1z M760 356h1v1h-1z M760 355h1v1h-1z M760 354h1v1h-1z M752 351h1v1h-1z M752 350h1v1h-1z M752 349h1v1h-1z M752 348h1v1h-1z M753 352h1v1h-1z M753 347h1v1h-1z M754 352h1v1h-1z M754 347h1v1h-1z M755 348h1v1h-1z M756 348h1v1h-1z M757 349h1v1h-1z M758 350h1v1h-1z M759 351h1v1h-1z M760 352h1v1h-1z M760 351h1v1h-1z M760 350h1v1h-1z M760 349h1v1h-1z M760 348h1v1h-1z M760 347h1v1h-1z" fill="#00ffff"/>
<path d="M768 358h1v1h-1z M768 357h1v1h-1z M768 356h1v1h-1z M768 355h1v1h-1z M769 359h1v1h-1z M769 354h1v1h-1z M770 359h1v1h-1z M770 354h1v1h-1z M771 355h1v1h-1z M772 355h1v1h-1z M773 356h1v1h-1z M774 357h1v1h-1z M775 358h1v1h-1z M776 359h1v1h-1z M776 358h1v1h-1z M776 357h1v1h-1z M776 356h1v1h-1z M776 355h1v1h-1z M776 354h1v1h-1z M768 352h1v1h-1z M768 351h1v1h-1z M768 350h1v1h-1z M768 349h1v1h-1z M768 348h1v1h-1z M769 348h1v1h-1z M770 349h1v1h-1z M771 350h1v1h-1z M771 349h1v1h-1z M772 348h1v1h-1z M773 347h1v1h-1z M774 347h1v1h-1z M775 352h1v1h-1z M775 348h1v1h-1z M776 351h1v1h-1z M776 350h1v1h-1z M776 349h1v1h-1z" fill="#00ffff"/>
<path d="M1 0h1v1h-1z M2 0h1v1h-1z M3 0h1v1h-1z M4 0h1v1h-1z M0 1h1v1h-1z M5 1h1v1h-1z M0 2h1v1h-1z M5 2h1v1h-1z M4 3h1v1h-1z M4 4h1v1h-1z M3 5h1v1h-1z M2 6h1v1h-1z M1 7h1v1h-1z M0 8h1v1h-1z M1 8h1v1h-1z M2 8h1v1h-1z M3 8h1v1h-1z M4 8h1v1h-1z M5 8h1v1h-1z M11 0h1v1h-1z M10 1h1v1h-1z M11 1h1v1h-1z M9 2h1v1h-1z M11 2h1v1h-1z M8 3h1v1h-1z M11 3h1v1h-1z M7 4h1v1h-1z M11 4h1v1h-1z M7 5h1v1h-1z M8 5h1v1h-1z M9 5h1v1h-1z M10 5h1v1h-1z M11 5h1v1h-1z M12 5h1v1h-1z M11 6h1v1h-1z M11 7h1v1h-1z M11 8h1v1h-1z" fill="#00ffff" transform="translate(395 238) rotate(-55) translate(0 -8)" shape-rendering="auto"/>
<path d="M1 0h1v1h-1z M2 0h1v1h-1z M3 0h1v1h-1z M4 0h1v1h-1z M0 1h1v1h-1z M5 1h1v1h-1z M0 2h1v1h-1z M5 2h1v1h-1z M4 3h1v1h-1z M4 4h1v1h-1z M3 5h1v1h-1z M2 6h1v1h-1z M1 7h1v1h-1z M0 8h1v1h-1z M1 8h1v1h-1z M2 8h1v1h-1z M3 8h1v1h-1z M4 8h1v1h-1z M5 8h1v1h-1z M8 0h1v1h-1z M9 0h1v1h-1z M10 0h1v1h-1z M7 1h1v1h-1z M11 1h1v1h-1z M7 2h1v1h-1z M7 3h1v1h-1z M9 3h1v1h-1z M10 3h1v1h-1z M7 4h1v1h-1z M8 4h1v1h-1z M11 4h1v1h-1z M7 5h1v1h-1z M12 5h1v1h-1z M7 6h1v1h-1z M12 6h1v1h-1z M7 7h1v1h-1z M11 7h1v1h-1z M8 8h1v1h-1z M9 8h1v1h-1z M10 8h1v1h-1z" fill="#00ffff" transform="translate(389 355) rotate(55) translate(0 -8)" shape-rendering="auto"/>
<path d="M1 0h1v1h-1z M2 0h1v1h-1z M3 0h1v1h-1z M4 0h1v1h-1z M0 1h1v1h-1z M5 1h1v1h-1z M0 2h1v1h-1z M5 2h1v1h-1z M4 3h1v1h-1z M4 4h1v1h-1z M3 5h1v1h-1z M2 6h1v1h-1z M1 7h1v1h-1z M0 8h1v1h-1z M1 8h1v1h-1z M2 8h1v1h-1z M3 8h1v1h-1z M4 8h1v1h-1z M5 8h1v1h-1z M8 0h1v1h-1z M9 0h1v1h-1z M10 0h1v1h-1z M11 0h1v1h-1z M7 1h1v1h-1z M12 1h1v1h-1z M7 2h1v1h-1z M12 2h1v1h-1z M8 3h1v1h-1z M9 3h1v1h-1z M10 3h1v1h-1z M11 3h1v1h-1z M7 4h1v1h-1z M12 4h1v1h-1z M7 5h1v1h-1z M12 5h1v1h-1z M7 6h1v1h-1z M12 6h1v1h-1z M7 7h1v1h-1z M12 7h1v1h-1z M8 8h1v1h-1z M9 8h1v1h-1z M10 8h1v1h-1z M11 8h1v1h-1z" fill="#00ffff" transform="translate(395 479) rotate(-55) translate(0 -8)" shape-rendering="auto"/>
<path d="M402 169 L411 173.5 L402 178 Z M484 169 L493 173.5 L484 178 Z M565 169 L574 173.5 L565 178 Z M645 169 L654 173.5 L645 178 Z M725 169 L734 173.5 L725 178 Z M773 169 L782 173.5 L773 178 Z M402 530 L411 534.5 L402 539 Z M484 530 L493 534.5 L484 539 Z M565 530 L574 534.5 L565 539 Z M645 530 L654 534.5 L645 539 Z M725 530 L734 534.5 L725 539 Z M773 530 L782 534.5 L773 539 Z M402 289 L411 293.5 L402 298 Z M402 410 L411 414.5 L402 419 Z M360.5 225 L365 233.5 L356 233.5 Z M360.5 345 L365 353.5 L356 353.5 Z M360.5 466 L365 474.5 L356 474.5 Z M443.5 225 L448 233.5 L439 233.5 Z M443.5 345 L448 353.5 L439 353.5 Z M443.5 466 L448 474.5 L439 474.5 Z M524.5 345 L529 353.5 L520 353.5 Z M604.5 345 L609 353.5 L600 353.5 Z M684.5 345 L689 353.5 L680 353.5 Z M764.5 345 L769 353.5 L760 353.5 Z M780.5 345 L785 353.5 L776 353.5 Z M400 232 L408 226 L407 237 Z M397 345 L406 351 L399 357 Z M400 473 L408 467 L407 478 Z" stroke="#00ffff" stroke-width="2" fill="none" stroke-linejoin="miter" shape-rendering="auto"/>
<path d="M360.5 534.5 L372.5 547.5 L347.5 547.5 Z M780.5 534.5 L792.5 546.5 L767.5 546.5 Z" stroke="#ffff00" stroke-width="1" fill="none"/>
<path d="M443.5 534.5 L450.5 542.5 L436.5 542.5 Z M524.5 534.5 L531.5 542.5 L517.5 542.5 Z M604.5 534.5 L611.5 542.5 L597.5 542.5 Z M684.5 534.5 L691.5 542.5 L677.5 542.5 Z M764.5 534.5 L771.5 542.5 L757.5 542.5 Z" stroke="#ffff00" stroke-width="1" fill="none"/>
<path d="M347 548h1v1h-1z M350 548h1v1h-1z M353 548h1v1h-1z M356 548h1v1h-1z M359 548h1v1h-1z M362 548h1v1h-1z M365 548h1v1h-1z M368 548h1v1h-1z M371 548h1v1h-1z M767 547h1v1h-1z M770 547h1v1h-1z M773 547h1v1h-1z M776 547h1v1h-1z M779 547h1v1h-1z M782 547h1v1h-1z M785 547h1v1h-1z M788 547h1v1h-1z M791 547h1v1h-1z M433 553h19v2h-19z M514 553h19v2h-19z M594 553h19v2h-19z M674 553h19v2h-19z M754 553h19v2h-19z" fill="#ffff00"/>
<circle cx="443.5" cy="549.5" r="3" stroke="#ffff00" fill="none" stroke-width="1" shape-rendering="auto"/><circle cx="524.5" cy="549.5" r="3" stroke="#ffff00" fill="none" stroke-width="1" shape-rendering="auto"/><circle cx="604.5" cy="549.5" r="3" stroke="#ffff00" fill="none" stroke-width="1" shape-rendering="auto"/><circle cx="684.5" cy="549.5" r="3" stroke="#ffff00" fill="none" stroke-width="1" shape-rendering="auto"/><circle cx="764.5" cy="549.5" r="3" stroke="#ffff00" fill="none" stroke-width="1" shape-rendering="auto"/>
<path d="M360.5 535 V542 M780.5 537 V542" stroke="#ff0000" stroke-width="1"/></svg>
<div class="r" style="left:1024px;top:80px;width:174px;height:548px;background:#f0f0f0;"></div>
<div class="r" style="left:1024px;top:80px;width:1px;height:548px;background:#ffffff;"></div>
<div class="r" style="left:1026px;top:82px;width:23px;height:21px;background:#cce4f7;box-sizing:border-box;border:1px solid #99ccf3;"></div>
<svg class="r" style="left:1024px;top:80px" width="80" height="26" viewBox="1024 80 80 26">
 <rect x="1029.5" y="85.5" width="6" height="6" fill="#f8f8f0" stroke="#4a7ab0"/>
 <path d="M1031 88.5 H1034 M1032.5 87 V90" stroke="#000"/>
 <rect x="1029.5" y="94.5" width="6" height="6" fill="#f8f8f0" stroke="#4a7ab0"/>
 <path d="M1031 97.5 H1034 M1032.5 96 V99" stroke="#000"/>
 <path d="M1037 87.5 H1040 M1037 96.5 H1040" stroke="#202020"/>
 <path d="M1037 89.5 H1045 M1037 91.5 H1045 M1037 93.5 H1045 M1037 98.5 H1045 M1037 100.5 H1045" stroke="#88a898" stroke-dasharray="2 1"/>
 <text x="1052" y="93" font-family="Liberation Serif" font-weight="bold" font-size="9" fill="#2a50b0">A</text>
 <text x="1052" y="101" font-family="Liberation Serif" font-weight="bold" font-size="9" fill="#b02828">Z</text>
 <path d="M1064.5 85 V100 M1061.5 96 L1064.5 100 L1067.5 96" stroke="#000" fill="none"/>
 <path d="M1074.5 83 V103" stroke="#a0a0a0"/>
 <rect x="1081.5" y="85.5" width="16" height="14" fill="#e4e4e4" stroke="#c0c0c0"/>
 <path d="M1082 88.5 H1097" stroke="#c0c0c0"/>
 <rect x="1084.5" y="90.5" width="10" height="6" fill="none" stroke="#c8c8c8"/>
</svg>
<div class="r" style="left:1024px;top:106px;width:174px;height:1px;background:#a0a0a0;"></div>
<div class="r" style="left:1025px;top:107px;width:155px;height:458px;background:#f4f7fc;overflow:hidden"><svg class="r" style="left:5px;top:5px" width="10" height="7"><path d="M1 1.5 L5 5.5 L9 1.5" stroke="#505050" stroke-width="1.6" fill="none"/></svg><div class="t" style="left:24px;top:3.19px;font-size:11px;color:#000;font-weight:bold;letter-spacing:0.05px;">Definition</div><div class="r" style="left:78px;top:17px;width:77px;height:15px;background:#ffffff;"></div><div class="r" style="left:22px;top:17px;width:55px;height:15px;overflow:hidden"><div class="t" style="left:2px;top:3.39px;font-size:11px;color:#000;">Name</div></div><div class="r" style="left:78px;top:17px;width:77px;height:15px;overflow:hidden"><div class="t" style="left:3px;top:3.39px;font-size:11px;color:#000;">WF1-1</div></div><div class="r" style="left:22px;top:33px;width:55px;height:15px;background:#ffffff;"></div><div class="r" style="left:78px;top:33px;width:77px;height:15px;background:#ffffff;"></div><div class="r" style="left:22px;top:33px;width:55px;height:15px;overflow:hidden"><div class="t" style="left:2px;top:3.39px;font-size:11px;color:#000;">Parapet W</div></div><div class="r" style="left:78px;top:33px;width:77px;height:15px;overflow:hidden"><div class="t" style="left:3px;top:3.39px;font-size:11px;color:#000;font-weight:bold;letter-spacing:0.5px;">False</div></div><div class="r" style="left:22px;top:49px;width:55px;height:15px;background:#ffffff;"></div><div class="r" style="left:78px;top:49px;width:77px;height:15px;background:#ffffff;"></div><div class="r" style="left:22px;top:49px;width:55px;height:15px;overflow:hidden"><div class="t" style="left:2px;top:3.39px;font-size:11px;color:#000;">Parapet Su</div></div><div class="r" style="left:78px;top:49px;width:77px;height:15px;overflow:hidden"><div class="t" style="left:3px;top:3.39px;font-size:11px;color:#000;font-weight:bold;letter-spacing:0.5px;">None</div></div><div class="r" style="left:22px;top:65px;width:55px;height:15px;background:#ffffff;"></div><div class="r" style="left:78px;top:65px;width:77px;height:15px;background:#ffffff;"></div><div class="r" style="left:22px;top:65px;width:55px;height:15px;overflow:hidden"><div class="t" style="left:2px;top:3.39px;font-size:11px;color:#6d6d6d;">ParentGuid</div></div><div class="r" style="left:78px;top:65px;width:77px;height:15px;overflow:hidden"><div class="t" style="left:3px;top:3.39px;font-size:11px;color:#6d6d6d;">711019ae-3fdd-</div></div><div class="r" style="left:22px;top:81px;width:55px;height:15px;background:#ffffff;"></div><div class="r" style="left:78px;top:81px;width:77px;height:15px;background:#ffffff;"></div><div class="r" style="left:22px;top:81px;width:55px;height:15px;overflow:hidden"><div class="t" style="left:2px;top:3.39px;font-size:11px;color:#6d6d6d;">Stud Spacing</div></div><div class="r" style="left:78px;top:81px;width:77px;height:15px;overflow:hidden"><div class="t" style="left:3px;top:3.39px;font-size:11px;color:#6d6d6d;">2</div></div><div class="r" style="left:22px;top:97px;width:55px;height:15px;background:#ffffff;"></div><div class="r" style="left:78px;top:97px;width:77px;height:15px;background:#ffffff;"></div><div class="r" style="left:22px;top:97px;width:55px;height:15px;overflow:hidden"><div class="t" style="left:2px;top:3.39px;font-size:11px;color:#000;">Reset</div></div><div class="r" style="left:78px;top:97px;width:77px;height:15px;overflow:hidden"><div class="t" style="left:3px;top:3.39px;font-size:11px;color:#000;font-weight:bold;letter-spacing:0.5px;">Reset Wall</div></div><div class="r" style="left:22px;top:113px;width:55px;height:15px;background:#ffffff;"></div><div class="r" style="left:78px;top:113px;width:77px;height:15px;background:#ffffff;"></div><div class="r" style="left:22px;top:113px;width:55px;height:15px;overflow:hidden"><div class="t" style="left:2px;top:3.39px;font-size:11px;color:#000;">Is Swage</div></div><div class="r" style="left:78px;top:113px;width:77px;height:15px;overflow:hidden"><div class="t" style="left:3px;top:3.39px;font-size:11px;color:#000;font-weight:bold;letter-spacing:0.5px;">True</div></div><div class="r" style="left:22px;top:129px;width:55px;height:15px;background:#ffffff;"></div><div class="r" style="left:78px;top:129px;width:77px;height:15px;background:#ffffff;"></div><div class="r" style="left:22px;top:129px;width:55px;height:15px;overflow:hidden"><div class="t" style="left:2px;top:3.39px;font-size:11px;color:#000;">On Slab</div></div><div class="r" style="left:78px;top:129px;width:77px;height:15px;overflow:hidden"><div class="t" style="left:3px;top:3.39px;font-size:11px;color:#000;font-weight:bold;letter-spacing:0.5px;">True</div></div><div class="r" style="left:22px;top:145px;width:55px;height:15px;background:#ffffff;"></div><div class="r" style="left:78px;top:145px;width:77px;height:15px;background:#ffffff;"></div><div class="r" style="left:22px;top:145px;width:55px;height:15px;overflow:hidden"><div class="t" style="left:2px;top:3.39px;font-size:11px;color:#000;">Heel As Li</div></div><div class="r" style="left:78px;top:145px;width:77px;height:15px;overflow:hidden"><div class="t" style="left:3px;top:3.39px;font-size:11px;color:#000;font-weight:bold;letter-spacing:0.5px;">True</div></div><div class="r" style="left:22px;top:161px;width:55px;height:15px;background:#ffffff;"></div><div class="r" style="left:78px;top:161px;width:77px;height:15px;background:#ffffff;"></div><div class="r" style="left:22px;top:161px;width:55px;height:15px;overflow:hidden"><div class="t" style="left:2px;top:3.39px;font-size:11px;color:#000;">Clear Man</div></div><div class="r" style="left:78px;top:161px;width:77px;height:15px;overflow:hidden"><div class="t" style="left:3px;top:3.39px;font-size:11px;color:#000;">...</div></div><div class="r" style="left:22px;top:177px;width:55px;height:15px;background:#ffffff;"></div><div class="r" style="left:78px;top:177px;width:77px;height:15px;background:#ffffff;"></div><div class="r" style="left:22px;top:177px;width:55px;height:15px;overflow:hidden"><div class="t" style="left:2px;top:3.39px;font-size:11px;color:#000;">Use Defau</div></div><div class="r" style="left:78px;top:177px;width:77px;height:15px;overflow:hidden"><div class="t" style="left:3px;top:3.39px;font-size:11px;color:#000;font-weight:bold;letter-spacing:0.5px;">None</div></div><div class="r" style="left:22px;top:193px;width:55px;height:15px;background:#ffffff;"></div><div class="r" style="left:78px;top:193px;width:77px;height:15px;background:#ffffff;"></div><div class="r" style="left:22px;top:193px;width:55px;height:15px;overflow:hidden"><div class="t" style="left:2px;top:3.39px;font-size:11px;color:#000;">Use Suppo</div></div><div class="r" style="left:78px;top:193px;width:77px;height:15px;overflow:hidden"><div class="t" style="left:3px;top:3.39px;font-size:11px;color:#000;font-weight:bold;letter-spacing:0.5px;">False</div></div><svg class="r" style="left:5px;top:213px" width="10" height="7"><path d="M1 1.5 L5 5.5 L9 1.5" stroke="#505050" stroke-width="1.6" fill="none"/></svg><div class="t" style="left:24px;top:211.19px;font-size:11px;color:#000;font-weight:bold;letter-spacing:0.05px;">Select Sections</div><div class="r" style="left:22px;top:225px;width:55px;height:15px;background:#ffffff;"></div><div class="r" style="left:78px;top:225px;width:77px;height:15px;background:#ffffff;"></div><div class="r" style="left:22px;top:225px;width:55px;height:15px;overflow:hidden"><div class="t" style="left:2px;top:3.39px;font-size:11px;color:#6d6d6d;">Top Track</div></div><div class="r" style="left:78px;top:225px;width:77px;height:15px;overflow:hidden"><div class="t" style="left:3px;top:3.39px;font-size:11px;color:#6d6d6d;">362SLS155-37mil</div></div><div class="r" style="left:22px;top:241px;width:55px;height:15px;background:#ffffff;"></div><div class="r" style="left:78px;top:241px;width:77px;height:15px;background:#ffffff;"></div><div class="r" style="left:22px;top:241px;width:55px;height:15px;overflow:hidden"><div class="t" style="left:2px;top:3.39px;font-size:11px;color:#6d6d6d;">Bottom Track</div></div><div class="r" style="left:78px;top:241px;width:77px;height:15px;overflow:hidden"><div class="t" style="left:3px;top:3.39px;font-size:11px;color:#6d6d6d;">362SLS155-37mil</div></div><div class="r" style="left:22px;top:257px;width:55px;height:15px;background:#ffffff;"></div><div class="r" style="left:78px;top:257px;width:77px;height:15px;background:#ffffff;"></div><div class="r" style="left:22px;top:257px;width:55px;height:15px;overflow:hidden"><div class="t" style="left:2px;top:3.39px;font-size:11px;color:#6d6d6d;">Blocking S</div></div><div class="r" style="left:78px;top:257px;width:77px;height:15px;overflow:hidden"><div class="t" style="left:3px;top:3.39px;font-size:11px;color:#6d6d6d;">150SLS50-54mil</div></div><div class="r" style="left:22px;top:273px;width:55px;height:15px;background:#ffffff;"></div><div class="r" style="left:78px;top:273px;width:77px;height:15px;background:#ffffff;"></div><div class="r" style="left:22px;top:273px;width:55px;height:15px;overflow:hidden"><div class="t" style="left:2px;top:3.39px;font-size:11px;color:#6d6d6d;">Stud Section</div></div><div class="r" style="left:78px;top:273px;width:77px;height:15px;overflow:hidden"><div class="t" style="left:3px;top:3.39px;font-size:11px;color:#6d6d6d;">362SLS155-37mil</div></div><div class="r" style="left:22px;top:289px;width:55px;height:15px;background:#ffffff;"></div><div class="r" style="left:78px;top:289px;width:77px;height:15px;background:#ffffff;"></div><div class="r" style="left:22px;top:289px;width:55px;height:15px;overflow:hidden"><div class="t" style="left:2px;top:3.39px;font-size:11px;color:#6d6d6d;">XBracing S</div></div><div class="r" style="left:78px;top:289px;width:77px;height:15px;overflow:hidden"><div class="t" style="left:3px;top:3.39px;font-size:11px;color:#6d6d6d;">400x16-33</div></div><div class="r" style="left:22px;top:305px;width:55px;height:15px;background:#ffffff;"></div><div class="r" style="left:78px;top:305px;width:77px;height:15px;background:#ffffff;"></div><div class="r" style="left:22px;top:305px;width:55px;height:15px;overflow:hidden"><div class="t" style="left:2px;top:3.39px;font-size:11px;color:#000;">Connection</div></div><div class="r" style="left:78px;top:305px;width:77px;height:15px;overflow:hidden"><div class="t" style="left:3px;top:3.39px;font-size:11px;color:#000;font-weight:bold;letter-spacing:0.5px;">#12-14x7/8[HWH]</div></div><div class="r" style="left:22px;top:321px;width:55px;height:15px;background:#ffffff;"></div><div class="r" style="left:78px;top:321px;width:77px;height:15px;background:#ffffff;"></div><div class="r" style="left:22px;top:321px;width:55px;height:15px;overflow:hidden"><div class="t" style="left:2px;top:3.39px;font-size:11px;color:#6d6d6d;">Flat</div></div><div class="r" style="left:78px;top:321px;width:77px;height:15px;overflow:hidden"><div class="t" style="left:3px;top:3.39px;font-size:11px;color:#6d6d6d;">True</div></div><div class="r" style="left:22px;top:337px;width:55px;height:15px;background:#ffffff;"></div><div class="r" style="left:78px;top:337px;width:77px;height:15px;background:#ffffff;"></div><div class="r" style="left:22px;top:337px;width:55px;height:15px;overflow:hidden"><div class="t" style="left:2px;top:3.39px;font-size:11px;color:#000;">Use Strong</div></div><div class="r" style="left:78px;top:337px;width:77px;height:15px;overflow:hidden"><div class="t" style="left:3px;top:3.39px;font-size:11px;color:#000;font-weight:bold;letter-spacing:0.5px;">False</div></div><svg class="r" style="left:5px;top:357px" width="10" height="7"><path d="M1 1.5 L5 5.5 L9 1.5" stroke="#505050" stroke-width="1.6" fill="none"/></svg><div class="t" style="left:24px;top:355.19px;font-size:11px;color:#000;font-weight:bold;letter-spacing:0.05px;">Design Parameters</div><div class="r" style="left:22px;top:369px;width:55px;height:15px;background:#ffffff;"></div><div class="r" style="left:78px;top:369px;width:77px;height:15px;background:#ffffff;"></div><div class="r" style="left:22px;top:369px;width:55px;height:15px;overflow:hidden"><div class="t" style="left:2px;top:3.39px;font-size:11px;color:#000;">Top design</div></div><div class="r" style="left:78px;top:369px;width:77px;height:15px;overflow:hidden"><div class="t" style="left:3px;top:3.39px;font-size:11px;color:#000;"></div></div><div class="r" style="left:22px;top:385px;width:55px;height:15px;background:#ffffff;"></div><div class="r" style="left:78px;top:385px;width:77px;height:15px;background:#ffffff;"></div><div class="r" style="left:22px;top:385px;width:55px;height:15px;overflow:hidden"><div class="t" style="left:2px;top:3.39px;font-size:11px;color:#000;">Bottom des</div></div><div class="r" style="left:78px;top:385px;width:77px;height:15px;overflow:hidden"><div class="t" style="left:3px;top:3.39px;font-size:11px;color:#000;"></div></div><div class="r" style="left:22px;top:401px;width:55px;height:15px;background:#ffffff;"></div><div class="r" style="left:78px;top:401px;width:77px;height:15px;background:#ffffff;"></div><div class="r" style="left:22px;top:401px;width:55px;height:15px;overflow:hidden"><div class="t" style="left:2px;top:3.39px;font-size:11px;color:#000;">Heel desig</div></div><div class="r" style="left:78px;top:401px;width:77px;height:15px;overflow:hidden"><div class="t" style="left:3px;top:3.39px;font-size:11px;color:#000;"></div></div><div class="r" style="left:22px;top:417px;width:55px;height:15px;background:#ffffff;"></div><div class="r" style="left:78px;top:417px;width:77px;height:15px;background:#ffffff;"></div><div class="r" style="left:22px;top:417px;width:55px;height:15px;overflow:hidden"><div class="t" style="left:2px;top:3.39px;font-size:11px;color:#000;">Design Sp</div></div><div class="r" style="left:78px;top:417px;width:77px;height:15px;overflow:hidden"><div class="t" style="left:3px;top:3.39px;font-size:11px;color:#000;font-weight:bold;letter-spacing:0.5px;">AISI2016USA</div></div><svg class="r" style="left:5px;top:437px" width="10" height="7"><path d="M1 1.5 L5 5.5 L9 1.5" stroke="#505050" stroke-width="1.6" fill="none"/></svg><div class="t" style="left:24px;top:435.19px;font-size:11px;color:#000;font-weight:bold;letter-spacing:0.05px;">Lateral Bracing</div><div class="r" style="left:22px;top:449px;width:55px;height:15px;background:#ffffff;"></div><div class="r" style="left:78px;top:449px;width:77px;height:15px;background:#ffffff;"></div><div class="r" style="left:22px;top:449px;width:55px;height:15px;overflow:hidden"><div class="t" style="left:2px;top:3.39px;font-size:11px;color:#000;">Top bracing</div></div><div class="r" style="left:78px;top:449px;width:77px;height:15px;overflow:hidden"><div class="t" style="left:3px;top:3.39px;font-size:11px;color:#000;font-weight:bold;letter-spacing:0.5px;">24</div></div></div>
<div class="r" style="left:1181px;top:107px;width:16px;height:458px;background:#f0f0f0;"></div>
<div class="r" style="left:1181px;top:124px;width:15px;height:212px;background:#cdcdcd;"></div>
<svg class="r" style="left:1181px;top:107px" width="16" height="458"><path d="M4 11.5 L7.5 7.5 L11 11.5" stroke="#606060" stroke-width="1.8" fill="none"/><path d="M4 448 L7.5 452 L11 448" stroke="#606060" stroke-width="1.6" fill="none"/></svg>
<div class="r" style="left:1024px;top:565px;width:174px;height:1px;background:#a0a0a0;"></div>
<div class="r" style="left:1024px;top:566px;width:174px;height:3px;background:#f0f0f0;"></div>
<div class="r" style="left:1024px;top:569px;width:174px;height:1px;background:#a0a0a0;"></div>
<div class="r" style="left:1024px;top:570px;width:173px;height:57px;background:#f0f0f0;"></div>
<div class="r" style="left:1024px;top:627px;width:174px;height:1px;background:#a0a0a0;"></div>
<div class="r" style="left:1197px;top:80px;width:1px;height:548px;background:#e3e3e3;"></div>
<div class="t" style="left:1030px;top:573.69px;font-size:11px;color:#000;font-weight:bold;letter-spacing:0.3px;">Name</div>
<div class="r" style="left:1px;top:628px;width:1197px;height:34px;background:#f0f0f0;"></div>
<div class="t" style="left:20px;top:641.14px;font-size:12px;color:#000;">Snap</div>
<div class="t" style="left:53px;top:641.14px;font-size:12px;color:#000;">:</div>
<div class="r" style="left:77px;top:631px;width:72px;height:28px;box-sizing:border-box;border-top:1px solid #a0a0a0;border-left:1px solid #a0a0a0;border-right:1px solid #ffffff;border-bottom:1px solid #ffffff;"><div style="width:100%;height:100%;box-sizing:border-box;background:#f0f0f0;border-top:1px solid #696969;border-left:1px solid #696969;border-right:1px solid #e3e3e3;border-bottom:1px solid #e3e3e3;"></div></div>
<div class="r" style="left:150px;top:631px;width:88px;height:28px;box-sizing:border-box;border-top:1px solid #a0a0a0;border-left:1px solid #a0a0a0;border-right:1px solid #ffffff;border-bottom:1px solid #ffffff;"><div style="width:100%;height:100%;box-sizing:border-box;background:#f0f0f0;border-top:1px solid #696969;border-left:1px solid #696969;border-right:1px solid #e3e3e3;border-bottom:1px solid #e3e3e3;"></div></div>
<div class="r" style="left:239px;top:631px;width:99px;height:28px;box-sizing:border-box;border-top:1px solid #a0a0a0;border-left:1px solid #a0a0a0;border-right:1px solid #ffffff;border-bottom:1px solid #ffffff;"><div style="width:100%;height:100%;box-sizing:border-box;background:#f0f0f0;border-top:1px solid #696969;border-left:1px solid #696969;border-right:1px solid #e3e3e3;border-bottom:1px solid #e3e3e3;"></div></div>
<div class="r" style="left:339px;top:631px;width:90px;height:28px;box-sizing:border-box;border-top:1px solid #e3e3e3;border-left:1px solid #e3e3e3;border-right:1px solid #696969;border-bottom:1px solid #696969;"><div style="width:100%;height:100%;box-sizing:border-box;background:#f0f0f0;border-top:1px solid #ffffff;border-left:1px solid #ffffff;border-right:1px solid #a0a0a0;border-bottom:1px solid #a0a0a0;"></div></div>
<svg class="r" style="left:0;top:628px" width="440" height="34" viewBox="0 628 440 34" shape-rendering="crispEdges">
 <defs><pattern id="pgrid" width="2" height="2" patternUnits="userSpaceOnUse"><rect width="2" height="2" fill="#5eb95e"/><rect width="1" height="1" fill="#8fd08f"/></pattern></defs>
 <rect x="79" y="637" width="14" height="15" fill="url(#pgrid)"/>
 <path d="M153 645.5 H165" stroke="#707070" stroke-width="2"/>
 <path d="M242 650.5 H252 M251.5 638 V651" stroke="#404040" stroke-width="1"/>
 <rect x="248.5" y="646.5" width="3" height="4" fill="none" stroke="#404040"/>
 <path d="M342 645.5 H352" stroke="#606060" stroke-width="2"/>
 <path d="M353.5 637 V652" stroke="#404040" stroke-width="2"/>
</svg>
<div class="t" style="left:109px;top:640.34px;font-size:12px;color:#1a0ab0;">Grid</div>
<div class="t" style="left:173px;top:640.34px;font-size:12px;color:#1a0ab0;">End Points</div>
<div class="t" style="left:259px;top:640.34px;font-size:12px;color:#1a0ab0;">Perpendicular</div>
<div class="t" style="left:374px;top:640.34px;font-size:12px;color:#000;">Nearst</div>
<div class="t" style="left:1117px;top:642.19px;font-size:11px;color:#000;">(-2.41, 11.25)</div>
<div class="r" style="left:1194px;top:650px;width:2px;height:2px;background:#a0a0a0;"></div><div class="r" style="left:1190px;top:654px;width:2px;height:2px;background:#a0a0a0;"></div><div class="r" style="left:1194px;top:654px;width:2px;height:2px;background:#a0a0a0;"></div><div class="r" style="left:1186px;top:658px;width:2px;height:2px;background:#a0a0a0;"></div><div class="r" style="left:1190px;top:658px;width:2px;height:2px;background:#a0a0a0;"></div><div class="r" style="left:1194px;top:658px;width:2px;height:2px;background:#a0a0a0;"></div>
<div class="t" style="left:16px;top:37.34px;font-size:12px;color:#000;">File</div>
<div class="t" style="left:53px;top:37.34px;font-size:12px;color:#000;">Display</div>
<div class="t" style="left:110px;top:37.34px;font-size:12px;color:#000;">Bracing</div>
<div class="t" style="left:169px;top:37.34px;font-size:12px;color:#000;">Action</div>
<div class="t" style="left:223px;top:37.34px;font-size:12px;color:#000;">Report</div>
<div class="t" style="left:277px;top:37.34px;font-size:12px;color:#000;">Wall Framing</div>
<div class="r" style="left:101px;top:33px;width:59px;height:21px;background:#f9f9f9;box-sizing:border-box;border:1px solid #a0a0a0;border-bottom:none;"></div>
<div class="t" style="left:110px;top:37.34px;font-size:12px;color:#000;">Bracing</div>
<div class="r" style="left:101px;top:52px;width:125px;height:26px;background:#f9f9f9;box-sizing:border-box;border:1px solid #a0a0a0;box-shadow:2px 2px 2px rgba(0,0,0,0.35);"></div>
<div class="r" style="left:102px;top:53px;width:57px;height:1px;background:#f9f9f9;"></div>
<div class="r" style="left:103px;top:54px;width:121px;height:22px;background:#bcdcf4;box-sizing:border-box;border:1px solid #0078d7;"></div>
<div class="t" style="left:137px;top:58.54px;font-size:12px;color:#000;letter-spacing:-0.35px;">K Bracing</div>
<svg class="r" style="left:217px;top:71px" width="16" height="22" viewBox="0 0 16 22"><path d="M1.5 1.5 V16.5 L5 13 L8.5 19.5 L10.5 18.5 L7.5 12.5 L12.5 12.5 Z" fill="#fff" stroke="#000" stroke-width="1" stroke-linejoin="miter"/></svg>
</body></html>
